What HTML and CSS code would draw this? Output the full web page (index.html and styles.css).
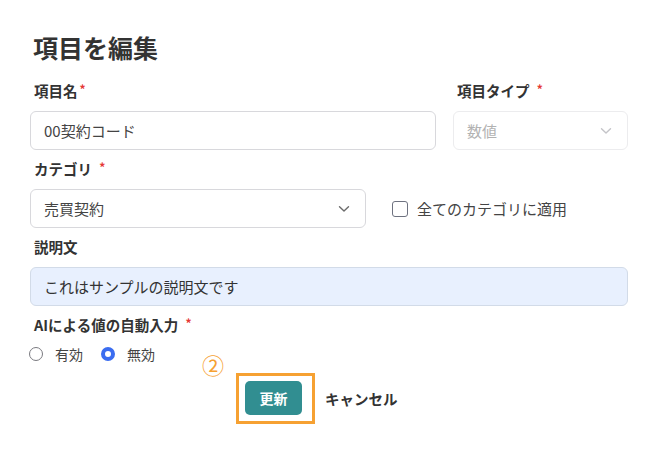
FILE: index.html
```html
<!DOCTYPE html>
<html lang="ja">
<head>
<meta charset="utf-8">
<title>項目を編集</title>
<link rel="stylesheet" href="styles.css">
</head>
<body>
<div class="page">
  <h1 class="title">項目を編集</h1>

  <div class="row row-top">
    <div class="field">
      <div class="label">項目名<span class="req">*</span></div>
      <div class="input">00契約コード</div>
    </div>
    <div class="field">
      <div class="label">項目タイプ <span class="req spaced">*</span></div>
      <div class="input select disabled">
        <span>数値</span>
        <svg class="chev" width="12" height="8" viewBox="0 0 12 8"><path d="M1.5 1.8 L6 6 L10.5 1.8" fill="none" stroke="currentColor" stroke-width="1.4" stroke-linecap="round" stroke-linejoin="round"/></svg>
      </div>
    </div>
  </div>

  <div class="field">
    <div class="label">カテゴリ <span class="req spaced">*</span></div>
    <div class="row row-cat">
      <div class="input select cat">
        <span>売買契約</span>
        <svg class="chev" width="12" height="8" viewBox="0 0 12 8"><path d="M1.5 1.8 L6 6 L10.5 1.8" fill="none" stroke="currentColor" stroke-width="1.4" stroke-linecap="round" stroke-linejoin="round"/></svg>
      </div>
      <label class="check"><span class="box"></span>全てのカテゴリに適用</label>
    </div>
  </div>

  <div class="field">
    <div class="label">説明文</div>
    <div class="input filled">これはサンプルの説明文です</div>
  </div>

  <div class="field">
    <div class="label">AIによる値の自動入力 <span class="req spaced">*</span></div>
    <div class="radios">
      <label class="radio"><span class="dot"></span>有効</label>
      <label class="radio on"><span class="dot"></span>無効</label>
    </div>
  </div>

  <div class="actions">
    <span class="marker">②</span>
    <div class="btn-wrap">
      <button class="btn">更新</button>
      <span class="highlight"></span>
    </div>
    <span class="cancel">キャンセル</span>
  </div>
</div>
</body>
</html>
```

FILE: styles.css
```css
html, body {
  margin: 0;
  padding: 0;
  background: #ffffff;
}
body {
  font-family: "Noto Sans CJK JP", "Noto Sans", sans-serif;
  color: #333;
}
.page {
  padding: 30px 42px 40px 30px;
  display: flex;
  flex-direction: column;
  gap: 9px;
}
.title {
  margin: 0 0 8px 3px;
  font-size: 25px;
  line-height: 34px;
  font-weight: 700;
  color: #333;
}
.field {
  display: flex;
  flex-direction: column;
  gap: 10px;
}
.label {
  height: 20px;
  padding-left: 4px;
  font-size: 14.5px;
  line-height: 20px;
  font-weight: 700;
  color: #333;
  white-space: nowrap;
}
.req {
  color: #e53935;
  font-size: 12px;
  line-height: 1;
  vertical-align: top;
  position: relative;
  top: 2px;
  margin-left: 2px;
}
.req.spaced {
  margin-left: 4px;
}
.row-top {
  display: grid;
  grid-template-columns: 1fr 175px;
  gap: 17px;
}
.input {
  box-sizing: border-box;
  height: 39px;
  border: 1px solid #d8d8dc;
  border-radius: 6px;
  padding: 0 13px;
  display: flex;
  align-items: center;
  font-size: 15px;
  color: #444;
}
.select {
  justify-content: space-between;
}
.chev {
  color: #6b6b6b;
  margin-right: 2px;
}
.disabled {
  border-color: #ececee;
  color: #b2b2b2;
}
.disabled .chev {
  color: #c4c4c8;
}
.row-cat {
  display: flex;
  align-items: center;
  gap: 26px;
}
.cat {
  width: 336px;
}
.check {
  display: flex;
  align-items: center;
  gap: 9px;
  font-size: 15px;
  color: #444;
}
.box {
  box-sizing: border-box;
  width: 16px;
  height: 16px;
  border: 1.5px solid #6e7280;
  border-radius: 3px;
}
.filled {
  background: #e8f0fe;
  border-color: #d2dbe8;
  color: #333;
}
.radios {
  display: flex;
  gap: 18px;
  height: 18px;
  align-items: center;
  margin-left: -1px;
}
.radio {
  display: flex;
  align-items: center;
  gap: 12px;
  font-size: 14px;
  color: #444;
}
.dot {
  box-sizing: border-box;
  width: 14px;
  height: 14px;
  border-radius: 50%;
  border: 1.5px solid #7a7a80;
}
.radio.on .dot {
  border: 4.5px solid #3b6df0;
  background: #fff;
}
.actions {
  position: relative;
  display: flex;
  align-items: center;
  gap: 23px;
  padding-left: 215px;
  margin-top: 9px;
}
.btn-wrap {
  position: relative;
}
.btn {
  display: block;
  width: 57px;
  height: 34px;
  border: none;
  border-radius: 5px;
  background: #318e91;
  color: #fff;
  font-family: inherit;
  font-size: 14px;
  font-weight: 700;
}
.highlight {
  position: absolute;
  left: -9px;
  right: -13px;
  top: -8px;
  bottom: -9px;
  border: 3px solid #f6a132;
}
.cancel {
  font-size: 14.5px;
  font-weight: 700;
  color: #333;
}
.marker {
  position: absolute;
  left: 172px;
  top: -29px;
  font-size: 22px;
  line-height: 24px;
  color: #f6a132;
}
```
